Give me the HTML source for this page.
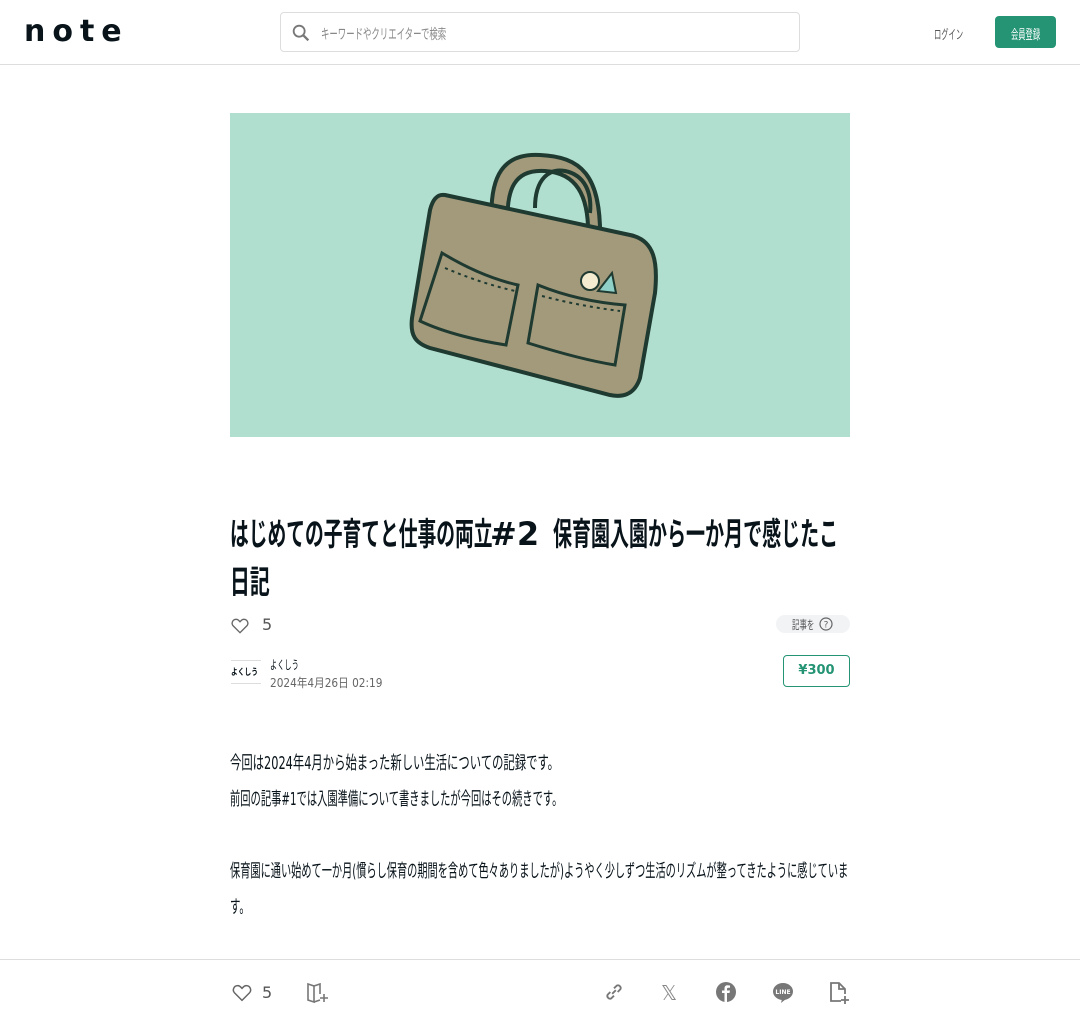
<!DOCTYPE html>
<html><head><meta charset="utf-8"><style>
*{box-sizing:border-box;margin:0;padding:0}
body{width:1080px;height:1024px;overflow:hidden;background:#fff;font-family:"DejaVu Sans","Liberation Sans","Noto Sans CJK JP",sans-serif;color:#08131a;position:relative}
.s{position:absolute;white-space:nowrap;transform-origin:0 50%}
.hdr{position:absolute;top:0;left:0;width:1080px;height:65px;border-bottom:1px solid #ddd}
.logo{position:absolute;left:24px;top:20px;font:bold 30px "DejaVu Sans",sans-serif;letter-spacing:7px;line-height:24px}
.search{position:absolute;left:280px;top:12px;width:520px;height:40px;border:1px solid #ddd;border-radius:4px}
.reg{position:absolute;left:995px;top:16px;width:61px;height:32px;background:#249474;border-radius:4px}
.hero{position:absolute;left:230px;top:113px;width:620px;height:324px;background:#b0dfd0}
.t{font-size:32px;font-weight:bold;line-height:48px}
.b{font-size:18px;line-height:36px}
.price{position:absolute;left:783px;top:655px;width:67px;height:32px;border:1px solid #249474;border-radius:4px;color:#249474;font-size:13px;font-weight:bold;text-align:center;line-height:30px}
.foot{position:absolute;left:0;top:959px;width:1080px;height:65px;border-top:1px solid #ddd}
</style></head><body>
<div class="hdr">
<div class="logo">note</div>
<div class="search"><svg style="position:absolute;left:9px;top:9px" width="22" height="22" viewBox="0 0 24 24"><circle cx="10" cy="10" r="6" fill="none" stroke="#777" stroke-width="2"/><path d="M14.5 14.5L20 20" stroke="#777" stroke-width="2.5"/></svg><span class="s" style="left:40px;top:11px;font-size:14px;color:#888;transform:scaleX(0.6)">キーワードやクリエイターで検索</span></div>
<span class="s" style="left:934px;top:24px;font-size:13px;color:#555;transform:scaleX(0.56)">ログイン</span>
<div class="reg"></div>
<span class="s" style="left:1011px;top:24px;font-size:13px;color:#fff;transform:scaleX(0.56)">会員登録</span>
</div>
<div class="hero"><svg width="620" height="324" viewBox="0 0 620 324">
<path d="M262 115 C258 60 275 40 310 42 C350 44 372 60 370 130 L358 128 C360 80 345 60 315 58 C285 56 275 75 278 117 Z" fill="#a39a7c" stroke="#1f3a30" stroke-width="4"/>
<path d="M305 95 C305 65 320 55 335 58 C355 62 362 80 360 100" fill="none" stroke="#1f3a30" stroke-width="4"/>
<path d="M215 82 L400 122 C425 127 428 150 425 180 L410 265 C405 280 395 285 380 282 L200 235 C185 230 180 222 182 205 L200 97 C203 85 208 81 215 82 Z" fill="#a39a7c" stroke="#1f3a30" stroke-width="4"/>
<path d="M212 140 C245 160 270 168 288 172 L276 232 C250 228 215 220 190 208 Z" fill="none" stroke="#1f3a30" stroke-width="3"/>
<path d="M308 172 C340 185 370 190 395 192 L385 252 C360 248 330 240 298 230 Z" fill="none" stroke="#1f3a30" stroke-width="3"/>
<path d="M215 155 Q250 170 285 178 M312 183 Q350 193 390 198" fill="none" stroke="#1f3a30" stroke-width="2" stroke-dasharray="3 4"/>
<circle cx="360" cy="168" r="9" fill="#f3ecd0" stroke="#1f3a30" stroke-width="2"/>
<path d="M368 178 L382 160 L386 180 Z" fill="#8fd0c8" stroke="#1f3a30" stroke-width="2"/>
</svg></div>
<span class="s t" style="left:230px;top:510px;transform:scaleX(0.586)">はじめての子育てと仕事の両立</span>
<span class="s t" style="left:490px;top:510px;font-family:'DejaVu Sans',sans-serif">#2</span>
<span class="s t" style="left:553px;top:510px;transform:scaleX(0.594)">保育園入園から一か月で感じたこ</span>
<span class="s t" style="left:230px;top:558px;transform:scaleX(0.62)">日記</span>
<svg style="position:absolute;left:230px;top:616px" width="20" height="20" viewBox="0 0 24 24"><path d="M12 20 L4 12 C1 9 3 4 7.5 4 C10 4 11 6 12 7 C13 6 14 4 16.5 4 C21 4 23 9 20 12 Z" fill="none" stroke="#666" stroke-width="1.6"/></svg>
<span class="s" style="left:262px;top:615px;font-size:16px;color:#555">5</span>
<div style="position:absolute;left:776px;top:615px;width:74px;height:18px;background:#f1f3f5;border-radius:9px"></div>
<span class="s" style="left:792px;top:616px;font-size:12px;color:#555;transform:scaleX(0.62)">記事を</span>
<svg style="position:absolute;left:819px;top:617px" width="14" height="14" viewBox="0 0 14 14"><circle cx="7" cy="7" r="6" fill="none" stroke="#666" stroke-width="1.2"/><text x="7" y="10.5" font-size="9" text-anchor="middle" fill="#666" font-family="DejaVu Sans">?</text></svg>
<div style="position:absolute;left:231px;top:660px;width:30px;height:24px;border-top:1px solid #ddd;border-bottom:1px solid #ddd"></div>
<span class="s" style="left:231px;top:665px;font-size:9px;font-weight:bold;transform:scaleX(0.75)">よくしう</span>
<span class="s" style="left:270px;top:656px;font-size:12px;transform:scaleX(0.6)">よくしう</span>
<span class="s" style="left:270px;top:674px;font-size:12px;color:#666;transform:scaleX(0.88)">2024年4月26日 02:19</span>
<div class="price">¥300</div>
<span class="s b" style="left:230px;top:746px;transform:scaleX(0.63)">今回は2024年4月から始まった新しい生活についての記録です。</span>
<span class="s b" style="left:230px;top:782px;transform:scaleX(0.571)">前回の記事#1では入園準備について書きましたが今回はその続きです。</span>
<span class="s b" style="left:230px;top:854px;transform:scaleX(0.566)">保育園に通い始めて一か月(慣らし保育の期間を含めて色々ありましたが)ようやく少しずつ生活のリズムが整ってきたように感じていま</span>
<span class="s b" style="left:230px;top:890px;transform:scaleX(0.58)">す。</span>
<div class="foot">
<svg style="position:absolute;left:231px;top:22px" width="22" height="22" viewBox="0 0 24 24"><path d="M12 20 L4 12 C1 9 3 4 7.5 4 C10 4 11 6 12 7 C13 6 14 4 16.5 4 C21 4 23 9 20 12 Z" fill="none" stroke="#666" stroke-width="1.6"/></svg>
<span class="s" style="left:262px;top:23px;font-size:16px;color:#555">5</span>
<svg style="position:absolute;left:306px;top:22px" width="24" height="22" viewBox="0 0 24 22"><path d="M2 2 L8 4 L8 20 L2 18 Z M8 4 L14 2 L14 12 M8 20 L14 18" fill="none" stroke="#777" stroke-width="1.6"/><path d="M18 12 V20 M14 16 H22" stroke="#777" stroke-width="1.6"/></svg>
<svg style="position:absolute;left:603px;top:21px" width="22" height="22" viewBox="0 0 24 24"><path d="M10 14 L14 10 M8 12 L5 15 a3 3 0 0 0 4 4 L12 16 M12 8 L15 5 a3 3 0 0 1 4 4 L16 12" fill="none" stroke="#777" stroke-width="2"/></svg>
<div style="position:absolute;left:661px;top:21px;font-size:20px;color:#888">𝕏</div>
<svg style="position:absolute;left:716px;top:22px" width="20" height="20" viewBox="0 0 20 20"><circle cx="10" cy="10" r="10" fill="#777"/><path d="M11 20 V11 H13.5 L14 8.5 H11 V7 C11 6 11.5 5.7 12.5 5.7 H14 V3.5 C13 3.4 12.2 3.3 11.5 3.3 C9.5 3.3 8.5 4.5 8.5 6.5 V8.5 H6 V11 H8.5 V20 Z" fill="#fff"/></svg>
<svg style="position:absolute;left:772px;top:22px" width="22" height="22" viewBox="0 0 22 22"><ellipse cx="11" cy="9.5" rx="10" ry="8.5" fill="#777"/><path d="M10 17 L9 21 L14 17 Z" fill="#777"/><text x="11" y="12" font-size="6" font-weight="bold" fill="#fff" text-anchor="middle" font-family="DejaVu Sans">LINE</text></svg>
<svg style="position:absolute;left:829px;top:21px" width="22" height="24" viewBox="0 0 22 24"><path d="M12 20 H2 V2 H10 L16 8 V13 M10 2 V8 H16" fill="none" stroke="#777" stroke-width="1.8"/><path d="M16 15 V23 M12 19 H20" stroke="#777" stroke-width="1.8"/></svg>
</div>
</body></html>
